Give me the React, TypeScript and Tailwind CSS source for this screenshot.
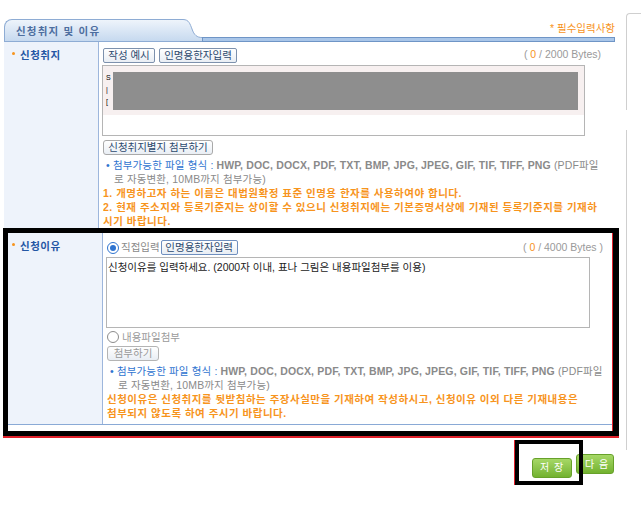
import type { ReactNode } from "react";

const font = "font-['Liberation_Sans','Noto_Sans_CJK_KR',sans-serif]";

function SmallButton({
  children,
  className = "",
}: {
  children: ReactNode;
  className?: string;
}) {
  return (
    <button
      className={`flex h-[15px] items-center justify-center rounded-[2px] border bg-gradient-to-b from-white to-[#e9eef4] text-[10.5px] leading-none ${className}`}
    >
      {children}
    </button>
  );
}

function Radio({ checked }: { checked?: boolean }) {
  return (
    <span
      className={`flex h-[12px] w-[12px] items-center justify-center rounded-full border bg-white ${
        checked ? "border-[#2f74d0]" : "border-[#8c8c8c]"
      }`}
    >
      {checked && <span className="h-[6px] w-[6px] rounded-full bg-[#2f74d0]" />}
    </span>
  );
}

function Counter({ max, spaced }: { max: string; spaced?: boolean }) {
  return (
    <span className="text-[10.5px] text-[#9a9a9a]">
      ( <span className="text-[#f7941d]">0</span> / {max} Bytes{spaced ? " )" : ")"}
    </span>
  );
}

function FileNote() {
  return (
    <div className="mt-[3px] whitespace-nowrap pl-[4px] text-[10.5px] leading-[14px] tracking-[0.15px] text-[#8a8a8a]">
      <div className="h-[14px] overflow-hidden">
        <span className="text-[#2f74d0]">• 첨부가능한 파일 형식 : </span>
        <span className="font-bold">
          HWP, DOC, DOCX, PDF, TXT, BMP, JPG, JPEG, GIF, TIF, TIFF, PNG
        </span>{" "}
        (PDF파일
      </div>
      <div className="h-[14px] overflow-hidden pl-[8px]">로 자동변환, 10MB까지 첨부가능)</div>
    </div>
  );
}

function OrangeLine({ children }: { children: ReactNode }) {
  return <div className="h-[14px] overflow-hidden">{children}</div>;
}

function Label({ children, className = "" }: { children: ReactNode; className?: string }) {
  return (
    <div
      className={`flex w-[95px] shrink-0 items-start gap-[5px] border-r border-[#9db6dc] bg-[#eef3fb] pt-[6px] ${className}`}
    >
      <span className="mt-[4px] h-[3px] w-[3px] rounded-full bg-[#f7941d]" />
      <span className="text-[10.5px] font-bold leading-[14px] tracking-[0.5px] text-[#2456a4]">
        {children}
      </span>
    </div>
  );
}

export default function App() {
  return (
    <div className={`flex h-[515px] w-[641px] bg-white pl-[3px] ${font}`}>
      <div className="w-[616px] shrink-0">
        {/* header tab */}
        <div className="ml-[1px] mr-[4px] flex h-[42px] items-end">
          <div className="h-[23px] w-[176px] rounded-tl-[8px] border-b border-l border-t border-[#8eacd4] bg-gradient-to-b from-[#eef4fb] to-[#c6d9ef] pl-[11px] pt-[4px] text-[10.5px] font-bold tracking-[1.2px] text-[#4d6e9f]">
            신청취지 및 이유
          </div>
          <svg width="22" height="23" viewBox="0 0 22 23" className="block shrink-0">
            <defs>
              <linearGradient id="tabg" x1="0" y1="0" x2="0" y2="1">
                <stop offset="0" stopColor="#eef4fb" />
                <stop offset="1" stopColor="#c6d9ef" />
              </linearGradient>
            </defs>
            <path d="M0 0.5 H3 C9 0.5 10 5 12 10 C14 16 17 18.5 22 18.5 V23 H0 Z" fill="url(#tabg)" />
            <path d="M0 0.5 H3 C9 0.5 10 5 12 10 C14 16 17 18.5 22 18.5" fill="none" stroke="#8eacd4" />
            <path d="M0 22.5 H22" stroke="#7f9fca" />
          </svg>
          <div className="flex h-[23px] flex-1 flex-col justify-between">
            <div className="pt-[3px] text-right text-[10.5px] leading-[12px] text-[#f7941d]">
              * 필수입력사항
            </div>
            <div className="h-[5px] border border-[#6f95c6] bg-[#a9c6e9]" />
          </div>
        </div>

        {/* row 1 */}
        <div className="ml-[1px] mr-[4px] flex">
          <Label className="pl-[8px]">신청취지</Label>
          <div className="flex-1 pl-[3px]">
            <div className="mt-[6px] flex h-[14px] items-center justify-between pr-[14px]">
              <div className="flex gap-[4px] pl-[1px]">
                <SmallButton className="w-[52px] border-[#7d91ad] text-[#2d4a6e]">작성 예시</SmallButton>
                <SmallButton className="w-[78px] border-[#7d91ad] text-[#2d4a6e]">인명용한자입력</SmallButton>
              </div>
              <Counter max="2000" />
            </div>
            <div className="mt-[3px] h-[71px] w-[483px] border border-[#b5b5b5] bg-white">
              <div className="flex h-[49px] bg-[#f7f0f0] pt-[6px]">
                <div className="flex w-[9px] flex-col pl-[3px] text-[7px] leading-[12px] text-black">
                  <span>S</span>
                  <span>|</span>
                  <span>[</span>
                </div>
                <div className="ml-[1px] h-[38px] w-[465px] bg-[#8e8e8e]" />
              </div>
            </div>
            <SmallButton className="ml-[1px] mt-[4px] w-[110px] rounded-[3px] border-[#a9a9a9] to-[#e4e4e4] text-[#2d4a6e]">
              신청취지별지 첨부하기
            </SmallButton>
            <FileNote />
            <div className="whitespace-nowrap pl-[1px] text-[10.5px] font-bold leading-[14px] tracking-[0.5px] text-[#f7941d]">
              <OrangeLine>1. 개명하고자 하는 이름은 대법원확정 표준 인명용 한자를 사용하여야 합니다.</OrangeLine>
              <OrangeLine>2. 현재 주소지와 등록기준지는 상이할 수 있으니 신청취지에는 기본증명서상에 기재된 등록기준지를 기재하</OrangeLine>
              <OrangeLine>시기 바랍니다.</OrangeLine>
            </div>
          </div>
        </div>

        {/* row 2 */}
        <div className="border-[5px] border-r-[6px] border-black shadow-[0_2px_0_#e0202a]">
          <div className="border-r border-[#e0202a] pb-[6px]">
            <div className="flex border-b border-[#8aaad6]">
              <Label className="w-[91px] pl-[4px]">신청이유</Label>
              <div className="flex-1 pb-[4px] pl-[3px]">
                <div className="mt-[7px] flex h-[15px] items-center justify-between pr-[9px]">
                  <div className="flex items-center pl-[1px]">
                    <Radio checked />
                    <span className="ml-[2px] text-[10.5px] text-[#8a8a8a]">직접입력</span>
                    <SmallButton className="ml-[1px] w-[77px] border-[#6f8fbf] text-[#2d4a6e]">
                      인명용한자입력
                    </SmallButton>
                  </div>
                  <Counter max="4000" spaced />
                </div>
                <div className="mt-[2px] h-[71px] w-[484px] border border-[#b5b5b5] px-[1px] pt-[2px] text-[10.5px] leading-[14px] text-[#222]">
                  신청이유를 입력하세요. (2000자 이내, 표나 그림은 내용파일첨부를 이용)
                </div>
                <div className="mt-[2px] flex h-[14px] items-center pl-[1px]">
                  <Radio />
                  <span className="ml-[3px] text-[10.5px] leading-[14px] text-[#9a9a9a]">내용파일첨부</span>
                </div>
                <SmallButton className="ml-[1px] mt-[2px] w-[52px] rounded-[3px] border-[#b4b4b4] to-[#e6e6e6] text-[#9a9a9a]">
                  첨부하기
                </SmallButton>
                <FileNote />
                <div className="whitespace-nowrap pl-[1px] text-[10.5px] font-bold leading-[14px] tracking-[0.5px] text-[#f7941d]">
                  <OrangeLine>신청이유은 신청취지를 뒷받침하는 주장사실만을 기재하여 작성하시고, 신청이유 이외 다른 기재내용은</OrangeLine>
                  <OrangeLine>첨부되지 않도록 하여 주시기 바랍니다.</OrangeLine>
                </div>
              </div>
            </div>
          </div>
        </div>

        {/* bottom buttons */}
        <div className="mr-[5px] mt-[18px] flex justify-end gap-[4px]">
          <div className="relative">
            <button className="h-[20px] w-[40px] rounded-[3px] border border-[#67a12a] bg-gradient-to-b from-[#a6d866] to-[#73b22f] text-[10px] tracking-[1px] text-white">
              저 장
            </button>
            <div className="absolute left-[-17px] top-[-14px] h-[45px] w-[68px] border-[4px] border-black shadow-[-1px_0_0_#e0202a]" />
          </div>
          <button className="h-[20px] w-[38px] rounded-[3px] border border-[#67a12a] bg-gradient-to-b from-[#a6d866] to-[#73b22f] pl-[4px] text-[10px] tracking-[1px] text-white">
            다 음
          </button>
        </div>
      </div>

      {/* right panel edge */}
      <div className="ml-[7px] flex-1">
        <div className="mt-[13px] h-[97px] rounded-tl-[4px] border-l border-t border-[#cfcfcf]" />
        <div className="mt-[20px] h-[320px] border-l border-[#cfcfcf]" />
      </div>
    </div>
  );
}
